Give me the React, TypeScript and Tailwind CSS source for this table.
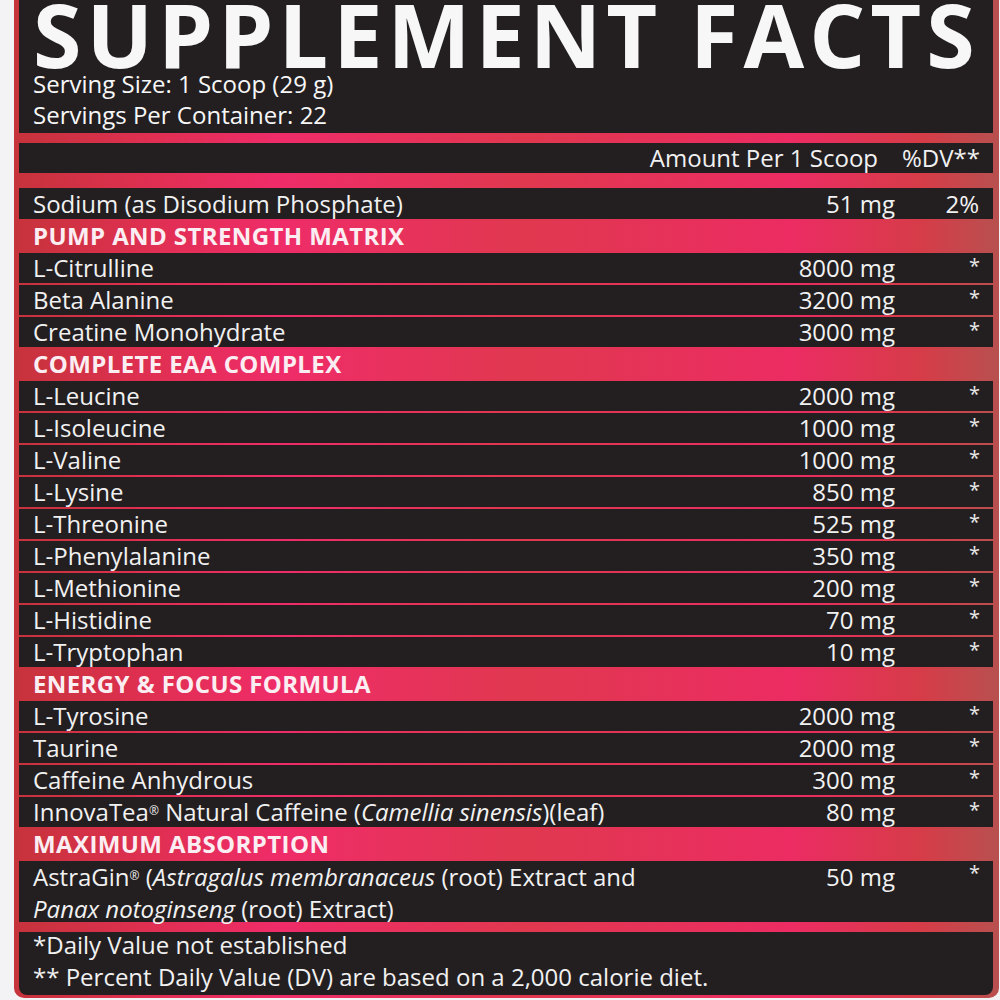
import React from "react";

type Row = { name: React.ReactNode; amt: string; dv: string };

const F = { fontFamily: '"Open Sans", "Liberation Sans", sans-serif' };

function DataRow({ r }: { r: Row }) {
  return (
    <div className="flex h-[30px] items-center bg-[#231f21] text-[24px] leading-none text-[#f1f1f1]">
      <div className="flex-1 pl-[14px] whitespace-nowrap">{r.name}</div>
      <div className="w-[200px] text-right">{r.amt}</div>
      <div className="w-[98px] self-start pr-[13px] pt-[3px] text-right text-[20px] text-[#e8e8e8]">{r.dv}</div>
    </div>
  );
}

function Header({ t }: { t: string }) {
  return (
    <div className="flex h-[34px] items-center pl-[14px] text-[24px] font-bold leading-none tracking-[0.4px] text-[#fbeef2]">
      {t}
    </div>
  );
}

function Group({ rows }: { rows: Row[] }) {
  return (
    <div className="flex flex-col gap-[2px]">
      {rows.map((r, i) => (
        <DataRow key={i} r={r} />
      ))}
    </div>
  );
}

const pump: Row[] = [
  { name: "L-Citrulline", amt: "8000 mg", dv: "*" },
  { name: "Beta Alanine", amt: "3200 mg", dv: "*" },
  { name: "Creatine Monohydrate", amt: "3000 mg", dv: "*" },
];
const eaa: Row[] = [
  { name: "L-Leucine", amt: "2000 mg", dv: "*" },
  { name: "L-Isoleucine", amt: "1000 mg", dv: "*" },
  { name: "L-Valine", amt: "1000 mg", dv: "*" },
  { name: "L-Lysine", amt: "850 mg", dv: "*" },
  { name: "L-Threonine", amt: "525 mg", dv: "*" },
  { name: "L-Phenylalanine", amt: "350 mg", dv: "*" },
  { name: "L-Methionine", amt: "200 mg", dv: "*" },
  { name: "L-Histidine", amt: "70 mg", dv: "*" },
  { name: "L-Tryptophan", amt: "10 mg", dv: "*" },
];
const energy: Row[] = [
  { name: "L-Tyrosine", amt: "2000 mg", dv: "*" },
  { name: "Taurine", amt: "2000 mg", dv: "*" },
  { name: "Caffeine Anhydrous", amt: "300 mg", dv: "*" },
  {
    name: (
      <>
        InnovaTea<sup className="text-[12px]">®</sup> Natural Caffeine (<i>Camellia sinensis</i>)(leaf)
      </>
    ),
    amt: "80 mg",
    dv: "*",
  },
];

export default function App() {
  return (
    <div className="min-h-[1000px] w-[1000px] bg-[#f3f3f5]" style={F}>
      <div className="ml-[14px] flex w-[985px] flex-col rounded-b-[10px] bg-[linear-gradient(to_right,#c6333b_0%,#e02f52_14%,#ef2c69_27%,#e0384f_52%,#ec2c63_79%,#d63c48_92%,#b8504f_100%)] pb-[3px] pl-[5px] pr-[6px]">
        {/* Title block */}
        <div className="h-[133px] bg-[#231f21] pl-[14px] text-[#f7f7f7]">
          <div className="whitespace-nowrap text-[88px] font-bold leading-[68px] tracking-[5px]">SUPPLEMENT FACTS</div>
          <div className="text-[24px] leading-[31px]">Serving Size: 1 Scoop (29 g)</div>
          <div className="text-[24px] leading-[31px]">Servings Per Container: 22</div>
        </div>
        <div className="h-[10px]" />
        <div className="flex h-[30px] items-center bg-[#231f21] text-[24px] leading-none text-[#f1f1f1]">
          <div className="flex-1" />
          <div className="text-right">Amount Per 1 Scoop</div>
          <div className="w-[115px] pr-[13px] text-right">%DV**</div>
        </div>
        <div className="h-[15px]" />
        <div className="flex h-[31px] items-center bg-[#231f21] text-[24px] leading-none text-[#f1f1f1]">
          <div className="flex-1 pl-[14px]">Sodium (as Disodium Phosphate)</div>
          <div className="w-[200px] text-right">51 mg</div>
          <div className="w-[98px] pr-[14px] text-right">2%</div>
        </div>
        <Header t="PUMP AND STRENGTH MATRIX" />
        <Group rows={pump} />
        <Header t="COMPLETE EAA COMPLEX" />
        <Group rows={eaa} />
        <Header t="ENERGY & FOCUS FORMULA" />
        <Group rows={energy} />
        <Header t="MAXIMUM ABSORPTION" />
        <div className="flex h-[61px] bg-[#231f21] text-[24px] leading-[32px] text-[#f1f1f1]">
          <div className="flex-1 pl-[14px]">
            AstraGin<sup className="text-[12px]">®</sup> (<i>Astragalus membranaceus</i> (root) Extract and
            <br />
            <i>Panax notoginseng</i> (root) Extract)
          </div>
          <div className="w-[200px] text-right">50 mg</div>
          <div className="w-[98px] pr-[13px] text-right text-[20px] leading-[24px] text-[#e8e8e8]">*</div>
        </div>
        <div className="h-[10px]" />
        <div className="h-[63px] rounded-b-[8px] bg-[#231f21] pl-[14px] text-[24px] leading-[32px] text-[#f1f1f1]">
          <div className="mt-[-3px]">*Daily Value not established</div>
          <div>** Percent Daily Value (DV) are based on a 2,000 calorie diet.</div>
        </div>
      </div>
    </div>
  );
}
